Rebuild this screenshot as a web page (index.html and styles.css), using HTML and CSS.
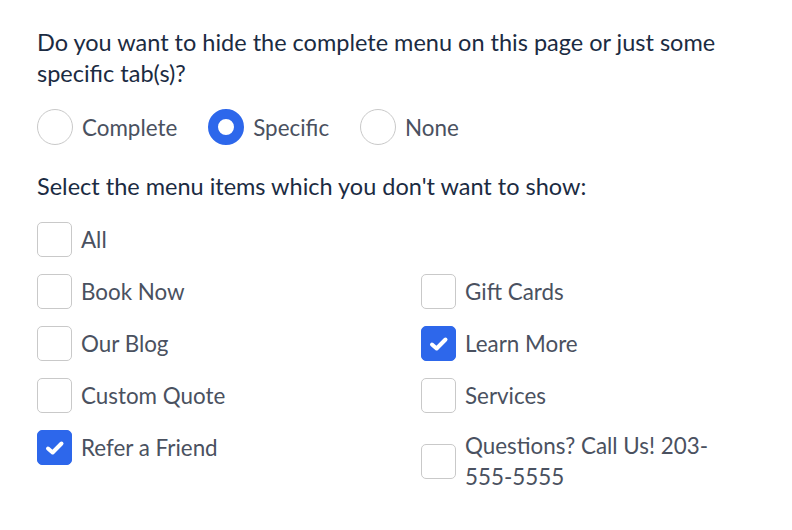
FILE: index.html
```html
<!DOCTYPE html>
<html>
<head>
<meta charset="utf-8">
<link rel="stylesheet" href="styles.css">
</head>
<body>
<div class="page">
  <p class="question">Do you want to hide the complete menu on this page or just some specific tab(s)?</p>
  <div class="radios">
    <label class="radio"><span class="dot"></span><span class="txt">Complete</span></label>
    <label class="radio"><span class="dot on"></span><span class="txt">Specific</span></label>
    <label class="radio"><span class="dot"></span><span class="txt">None</span></label>
  </div>
  <p class="question sub">Select the menu items which you don't want to show:</p>
  <div class="all">
    <label class="check"><span class="box"></span><span class="txt">All</span></label>
  </div>
  <div class="grid">
    <label class="check"><span class="box"></span><span class="txt">Book Now</span></label>
    <label class="check"><span class="box"></span><span class="txt">Gift Cards</span></label>
    <label class="check"><span class="box"></span><span class="txt">Our Blog</span></label>
    <label class="check"><span class="box on"><svg viewBox="0 0 22 22" width="22" height="22"><path d="M4 11.5 L8.6 15.5 L17.5 6.5" fill="none" stroke="#fff" stroke-width="4" stroke-linecap="round" stroke-linejoin="round"/></svg></span><span class="txt">Learn More</span></label>
    <label class="check"><span class="box"></span><span class="txt">Custom Quote</span></label>
    <label class="check"><span class="box"></span><span class="txt">Services</span></label>
    <label class="check"><span class="box on"><svg viewBox="0 0 22 22" width="22" height="22"><path d="M4 11.5 L8.6 15.5 L17.5 6.5" fill="none" stroke="#fff" stroke-width="4" stroke-linecap="round" stroke-linejoin="round"/></svg></span><span class="txt">Refer a Friend</span></label>
    <label class="check"><span class="box"></span><span class="txt">Questions? Call Us! 203-555-5555</span></label>
  </div>
</div>
</body>
</html>
```
FILE: styles.css
```css
html, body {
  margin: 0;
  padding: 0;
  background: #fff;
}
body {
  font-family: Lato, "Noto Sans", sans-serif;
}
.page {
  padding: 27px 0 0 37px;
  width: 700px;
}
.question {
  margin: 0;
  font-size: 23.5px;
  line-height: 31px;
  color: #1b2b42;
}
.radios {
  display: flex;
  margin-top: 20px;
}
.radio {
  display: flex;
  align-items: center;
  gap: 9px;
  margin-right: 31px;
}
.dot {
  width: 34px;
  height: 34px;
  border: 1px solid #c9c9c9;
  border-radius: 50%;
  box-sizing: content-box;
  flex: none;
}
.dot.on {
  border: 10px solid #2d67eb;
  width: 16px;
  height: 16px;
  background: #fff;
}
.txt {
  font-size: 22.4px;
  line-height: 31px;
  color: #4a5160;
}
.sub {
  margin-top: 26px;
}
.all {
  margin-top: 20px;
  margin-bottom: 17px;
}
.check {
  display: flex;
  align-items: center;
  gap: 9px;
}
.box {
  width: 33px;
  height: 33px;
  border: 1px solid #c9c9c9;
  border-radius: 5px;
  flex: none;
  display: flex;
  align-items: center;
  justify-content: center;
}
.box.on {
  background: #2d67eb;
  border-color: #2d67eb;
}
.grid {
  display: grid;
  grid-template-columns: 384px 290px;
  row-gap: 17px;
  align-items: start;
}
```
